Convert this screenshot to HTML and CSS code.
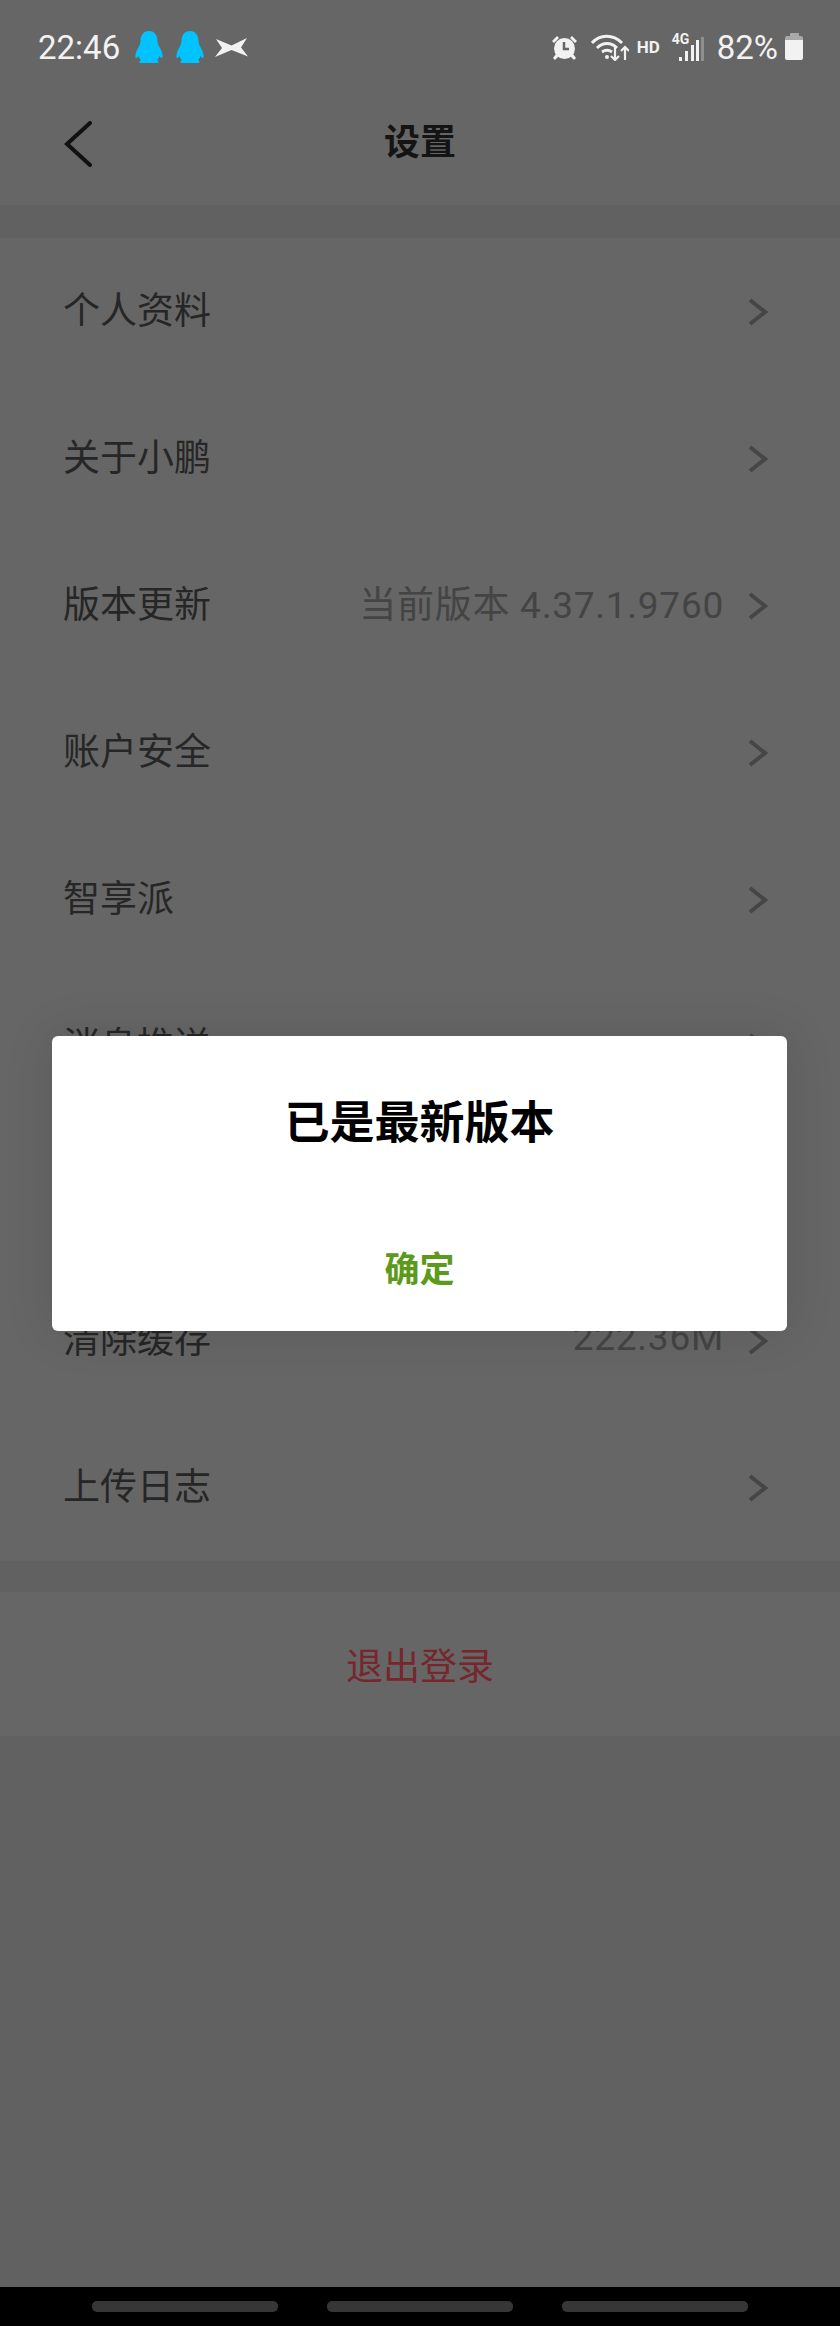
FILE: index.html
```html
<!DOCTYPE html>
<html>
<head>
  <meta charset="UTF-8" />
  <meta name="viewport" content="width=device-width, initial-scale=1.0" />
  <title>设置</title>
  <link rel="stylesheet" href="styles.css">
</head>
<body>
  <div class="screen">
    <div class="header">
      <div class="status-bar">
        <div class="status-left">
          <span class="status-text">22:46</span>
          <svg class="icon-qq" viewBox="0 0 28 32"><path d="M14 0C8 0 5.5 5 5.5 10C5.5 13 4 15 2.5 18C1 21 0 24 .5 27C2 27 3 26 3.5 25C4 27 5 28 6 29C4 30 4 32 6 32H22C24 32 24 30 22 29C23 28 24 27 24.5 25C25 26 26 27 27.5 27C28 24 27 21 25.5 18C24 15 22.5 13 22.5 10C22.5 5 20 0 14 0Z"/></svg>
          <svg class="icon-qq" viewBox="0 0 28 32"><path d="M14 0C8 0 5.5 5 5.5 10C5.5 13 4 15 2.5 18C1 21 0 24 .5 27C2 27 3 26 3.5 25C4 27 5 28 6 29C4 30 4 32 6 32H22C24 32 24 30 22 29C23 28 24 27 24.5 25C25 26 26 27 27.5 27C28 24 27 21 25.5 18C24 15 22.5 13 22.5 10C22.5 5 20 0 14 0Z"/></svg>
          <svg class="icon-xp" viewBox="0 0 33 19"><path d="M1 1L16.5 7.5L32 0L26 9.5L33 18.5L16.5 12L0 19L7 10Z"/></svg>
        </div>
        <div class="status-right">
          <svg class="icon-alarm" viewBox="0 0 27 25">
            <path class="fill" d="M1 6L6 1L8 3L3 8ZM26 6L21 1L19 3L24 8ZM5 19L2 23L4 25L8 21ZM22 19L25 23L23 25L19 21Z"/>
            <circle class="fill" cx="13.5" cy="13.5" r="10.5"/>
            <path class="hand" d="M13 7V14H18"/>
          </svg>
          <svg class="icon-wifi" viewBox="0 0 38 29">
            <path class="arc" d="M1 11C9 2 22 2 31 11M6 16C12 10 20 10 26 16M11 20C14 18 18 18 21 20"/>
            <circle class="fill" cx="16" cy="25" r="2"/>
            <path class="arrow" d="M24 15V28M20 24L24 28L28 24M34 28V15M30 19L34 15L38 19"/>
          </svg>
          <span class="status-hd">HD</span>
          <div class="signal">
            <span class="signal-type">4G</span>
            <svg class="icon-signal" viewBox="0 0 25 24">
              <rect class="fill" x="0" y="20" width="3" height="4"/>
              <rect class="fill" x="6" y="14" width="3" height="10"/>
              <rect class="fill" x="12" y="8" width="3" height="16"/>
              <rect class="fill" x="17" y="3" width="3" height="21"/>
              <rect class="dim" x="22" y="0" width="3" height="24"/>
            </svg>
          </div>
          <span class="status-text">82%</span>
          <div class="battery"><div class="battery-cap"></div><div class="battery-fill"></div></div>
        </div>
      </div>
      <div class="nav">
        <svg class="back" viewBox="0 0 28 46"><path d="M26 2L3 23L26 44"/></svg>
        <h1>设置</h1>
      </div>
    </div>

    <div class="section">
      <div class="row"><span class="row-label">个人资料</span><svg class="chevron" viewBox="0 0 20 28"><path d="M2 2L17 14L2 26"/></svg></div>
      <div class="row"><span class="row-label">关于小鹏</span><svg class="chevron" viewBox="0 0 20 28"><path d="M2 2L17 14L2 26"/></svg></div>
      <div class="row"><span class="row-label">版本更新</span><span class="row-value">当前版本 4.37.1.9760</span><svg class="chevron" viewBox="0 0 20 28"><path d="M2 2L17 14L2 26"/></svg></div>
      <div class="row"><span class="row-label">账户安全</span><svg class="chevron" viewBox="0 0 20 28"><path d="M2 2L17 14L2 26"/></svg></div>
      <div class="row"><span class="row-label">智享派</span><svg class="chevron" viewBox="0 0 20 28"><path d="M2 2L17 14L2 26"/></svg></div>
      <div class="row"><span class="row-label">消息推送</span><svg class="chevron" viewBox="0 0 20 28"><path d="M2 2L17 14L2 26"/></svg></div>
      <!-- this row sits fully behind the dialog -->
      <div class="row"></div>
      <div class="row"><span class="row-label">清除缓存</span><span class="row-value">222.36M</span><svg class="chevron" viewBox="0 0 20 28"><path d="M2 2L17 14L2 26"/></svg></div>
      <div class="row"><span class="row-label">上传日志</span><svg class="chevron" viewBox="0 0 20 28"><path d="M2 2L17 14L2 26"/></svg></div>
    </div>

    <div class="logout">退出登录</div>

    <div class="spacer"></div>

    <div class="system-nav">
      <div class="pill"></div>
      <div class="pill"></div>
      <div class="pill"></div>
    </div>

    <div class="dialog">
      <div class="dialog-title">已是最新版本</div>
      <div class="dialog-btn">确定</div>
    </div>
  </div>
</body>
</html>
```

FILE: styles.css
```css
* {
  margin: 0;
  padding: 0;
  box-sizing: border-box;
}

body {
  font-family: Roboto, "Noto Sans CJK SC", sans-serif;
  background: #616161;
}

.screen {
  position: relative;
  width: 840px;
  height: 2326px;
  display: flex;
  flex-direction: column;
  background: #616161;
  overflow: hidden;
}

.header {
  height: 205px;
  background: #666;
  margin-bottom: 33px;
}

/* Status bar */
.status-bar {
  height: 92px;
  padding: 31px 37px 0 38px;
  display: flex;
  justify-content: space-between;
  align-items: flex-start;
  color: #f2f2f2;
}

.status-left, .status-right {
  display: flex;
  align-items: flex-start;
}

.status-text {
  font-size: 33px;
  line-height: 32px;
  margin-top: 1px;
}

.icon-qq {
  width: 28px;
  height: 32px;
  margin-left: 15px;
  fill: #00c3ff;
}

.icon-qq + .icon-qq {
  margin-left: 13px;
}

.icon-xp {
  width: 33px;
  height: 19px;
  margin: 7px 0 0 11px;
  fill: #f2f2f2;
}

.fill {
  fill: #f2f2f2;
}

.dim {
  fill: #8f8f8f;
}

.icon-alarm {
  width: 27px;
  height: 25px;
  margin: 4px 13px 0 0;
}

.hand {
  fill: none;
  stroke: #666;
  stroke-width: 2.5;
}

.icon-wifi {
  width: 38px;
  height: 29px;
  margin: 1px 8px 0 0;
}

.arc, .arrow {
  fill: none;
  stroke: #f2f2f2;
}

.arc {
  stroke-width: 3;
}

.arrow {
  stroke-width: 2.2;
}

.status-hd {
  font-size: 17px;
  line-height: 14px;
  font-weight: 700;
  margin: 9px 12px 0 0;
}

.signal {
  position: relative;
  width: 32px;
  height: 30px;
  margin-right: 13px;
}

.signal-type {
  position: absolute;
  left: 0;
  top: 2px;
  font-size: 14px;
  line-height: 12px;
  font-weight: 700;
}

.icon-signal {
  position: absolute;
  right: 0;
  top: 6px;
  width: 25px;
  height: 24px;
}

.battery {
  width: 18px;
  height: 27px;
  margin: 2px 0 0 7px;
  display: flex;
  flex-direction: column;
  align-items: center;
}

.battery-cap {
  width: 9px;
  height: 3px;
  background: #a8a8a8;
  border-radius: 1px 1px 0 0;
}

.battery-fill {
  width: 18px;
  flex: 1;
  background: linear-gradient(#a8a8a8 0, #a8a8a8 4px, #f2f2f2 4px);
  border-radius: 2px;
}

/* Title bar */
.nav {
  height: 113px;
  position: relative;
  display: flex;
  justify-content: center;
  padding-top: 24px;
}

.nav h1 {
  font-size: 36px;
  line-height: 54px;
  font-weight: 700;
  color: #141414;
}

.back {
  position: absolute;
  left: 64px;
  top: 29px;
  width: 28px;
  height: 46px;
  fill: none;
  stroke: #111;
  stroke-width: 4;
  stroke-linecap: round;
}

/* Setting rows */
.section {
  background: #666;
  margin-bottom: 31px;
}

.row {
  height: 147px;
  padding: 0 72px 0 63px;
  display: flex;
  align-items: center;
}

.row-label {
  flex: 1;
  font-size: 37px;
  padding-bottom: 7px;
  color: #262626;
}

.row-value {
  font-size: 37px;
  letter-spacing: 0.75px;
  padding-bottom: 7px;
  color: #444;
  margin-right: 24px;
}

.chevron {
  width: 20px;
  height: 28px;
  fill: none;
  stroke: #464646;
  stroke-width: 4;
}

.logout {
  height: 144px;
  background: #666;
  display: flex;
  align-items: center;
  justify-content: center;
  font-size: 37px;
  color: #76262c;
}

.spacer {
  flex: 1;
}

/* Android nav bar */
.system-nav {
  height: 39px;
  background: #000;
  padding: 14px 92px 0;
  display: flex;
  justify-content: space-between;
}

.pill {
  width: 186px;
  height: 11px;
  background: #363636;
  border-radius: 5px;
}

/* Dialog */
.dialog {
  position: absolute;
  left: 52px;
  top: 1036px;
  width: 735px;
  height: 295px;
  background: #fff;
  border-radius: 6px;
  box-shadow: 0 0 50px rgba(0,0,0,0.12);
  display: flex;
  flex-direction: column;
  align-items: center;
}

.dialog-title {
  height: 172px;
  padding-bottom: 6px;
  display: flex;
  align-items: center;
  font-size: 45px;
  font-weight: 700;
  color: #000;
}

.dialog-btn {
  flex: 1;
  padding-bottom: 6px;
  display: flex;
  align-items: center;
  font-size: 35px;
  font-weight: 700;
  color: #5b9a1a;
}
```
